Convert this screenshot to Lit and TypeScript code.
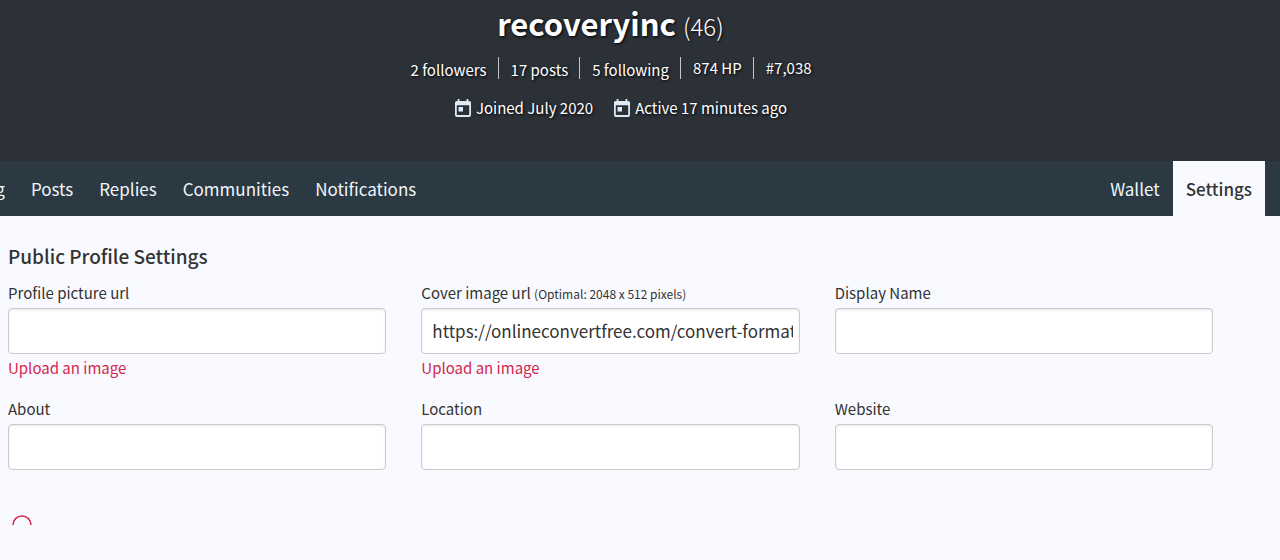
import { LitElement, html, css, svg, nothing } from "lit";
import { customElement } from "lit/decorators.js";

interface Field {
  id: string;
  label: string;
  hint?: string;
  value?: string;
  upload?: boolean;
}

const stats = [
  { text: "2 followers", link: true },
  { text: "17 posts", link: true },
  { text: "5 following", link: true },
  { text: "874 HP", link: false },
  { text: "#7,038", link: false },
];

const fields: Field[] = [
  { id: "picture", label: "Profile picture url", upload: true },
  {
    id: "cover",
    label: "Cover image url",
    hint: "(Optimal: 2048 x 512 pixels)",
    value: "https://onlineconvertfree.com/convert-format/",
    upload: true,
  },
  { id: "name", label: "Display Name" },
  { id: "about", label: "About" },
  { id: "location", label: "Location" },
  { id: "website", label: "Website" },
];

const calendar = html`<svg class="calendar" viewBox="3 1 18 20" aria-hidden="true">
  ${svg`<path fill="currentColor" d="M19 3h-1V1h-2v2H8V1H6v2H5c-1.11 0-1.99.9-1.99 2L3 19c0 1.1.89 2 2 2h14c1.1 0 2-.9 2-2V5c0-1.1-.9-2-2-2zm0 16H5V8h14v11zM7 10h5v5H7z"/>`}
</svg>`;

@customElement("app-root")
export class AppRoot extends LitElement {
  static styles = css`
    :host {
      display: block;
      min-height: 100vh;
      overflow: hidden;
      background: #f9faff;
      color: #333333;
      font-family: "Noto Sans CJK SC", "Noto Sans", sans-serif;
      font-size: 15px;
      line-height: 24px;
    }
    a {
      color: inherit;
      text-decoration: none;
    }
    .banner {
      display: flex;
      flex-direction: column;
      align-items: center;
      padding: 1px 59px 41px 0;
      background: #2c3138;
      color: #ffffff;
      text-shadow: 1px 1px 3px #000000;
    }
    .name {
      margin: 0;
      font-size: 31px;
      line-height: 44px;
      font-weight: 700;
    }
    .reputation {
      font-size: 24px;
      font-weight: 300;
    }
    .stats {
      display: flex;
      margin-top: 9px;
      line-height: 22px;
    }
    .stat {
      height: 22px;
      padding: 0 11px 0 12px;
      border-left: 1px solid #c3c7cb;
    }
    .stat:first-child {
      border-left: 0;
    }
    .stat.linked {
      box-sizing: border-box;
      padding-top: 2px;
    }
    .dates {
      display: flex;
      margin-top: 17px;
    }
    .date {
      display: flex;
      align-items: center;
      gap: 5px;
      margin-left: 21px;
    }
    .calendar {
      width: 16px;
      height: 18px;
      color: #dfeaf7;
    }
    .nav {
      display: flex;
      justify-content: space-between;
      padding-right: 15px;
      background: #2b3943;
      color: #eef6fa;
      font-size: 17px;
      line-height: 55px;
    }
    .tabs {
      display: flex;
    }
    .tabs.sections {
      margin-left: -44px;
    }
    .tab {
      padding: 0 13px;
    }
    .tab.active {
      background: #f9faff;
      color: #333333;
      font-weight: 500;
    }
    .settings {
      padding: 27px 67px 28px 8px;
    }
    .heading {
      margin: 0 0 12px;
      font-size: 19px;
      line-height: 26px;
      font-weight: 500;
    }
    .fields {
      display: grid;
      grid-template-columns: repeat(3, minmax(0, 1fr));
      column-gap: 35px;
      row-gap: 17px;
    }
    .label {
      display: block;
    }
    .hint {
      font-size: 12px;
      line-height: 1;
    }
    .input {
      display: block;
      box-sizing: border-box;
      width: 100%;
      height: 46px;
      margin-top: 3px;
      padding: 0 6px 2px 10px;
      border: 1px solid #c8cacc;
      border-radius: 4px;
      background: #ffffff;
      box-shadow: inset 0 1px 2px rgba(10, 10, 10, 0.1);
      color: #333333;
      font: inherit;
      font-size: 17px;
    }
    .upload {
      display: inline-block;
      margin-top: 2px;
      color: #d3264b;
    }
    .spinner {
      display: block;
      width: 20px;
      height: 20px;
      margin: 45px 0 0 4px;
    }
  `;

  render() {
    return html`
      <header class="banner">
        <h1 class="name">recoveryinc <span class="reputation">(46)</span></h1>
        <div class="stats">
          ${stats.map((s) =>
            s.link
              ? html`<span class="stat linked"><a href="#">${s.text}</a></span>`
              : html`<span class="stat">${s.text}</span>`
          )}
        </div>
        <div class="dates">
          <span class="date">${calendar}Joined July 2020</span>
          <span class="date">${calendar}Active 17 minutes ago</span>
        </div>
      </header>
      <nav class="nav">
        <div class="tabs sections">
          ${["Blog", "Posts", "Replies", "Communities", "Notifications"].map(
            (t) => html`<a class="tab" href="#">${t}</a>`
          )}
        </div>
        <div class="tabs">
          <a class="tab" href="#">Wallet</a>
          <a class="tab active" href="#" aria-current="page">Settings</a>
        </div>
      </nav>
      <main class="settings">
        <h2 class="heading">Public Profile Settings</h2>
        <form class="fields">
          ${fields.map(
            (f) => html`<div class="field">
              <label class="label" for=${f.id}
                >${f.label}${f.hint ? html` <span class="hint">${f.hint}</span>` : nothing}</label
              >
              <input class="input" id=${f.id} type="text" .value=${f.value ?? ""} />
              ${f.upload ? html`<a class="upload" href="#">Upload an image</a>` : nothing}
            </div>`
          )}
        </form>
        <svg class="spinner" viewBox="0 0 20 20" role="img" aria-label="Loading">
          <path d="M1 10a9 9 0 0 1 18 0" fill="none" stroke="#d3264b" stroke-width="1.5" />
        </svg>
      </main>
    `;
  }
}
